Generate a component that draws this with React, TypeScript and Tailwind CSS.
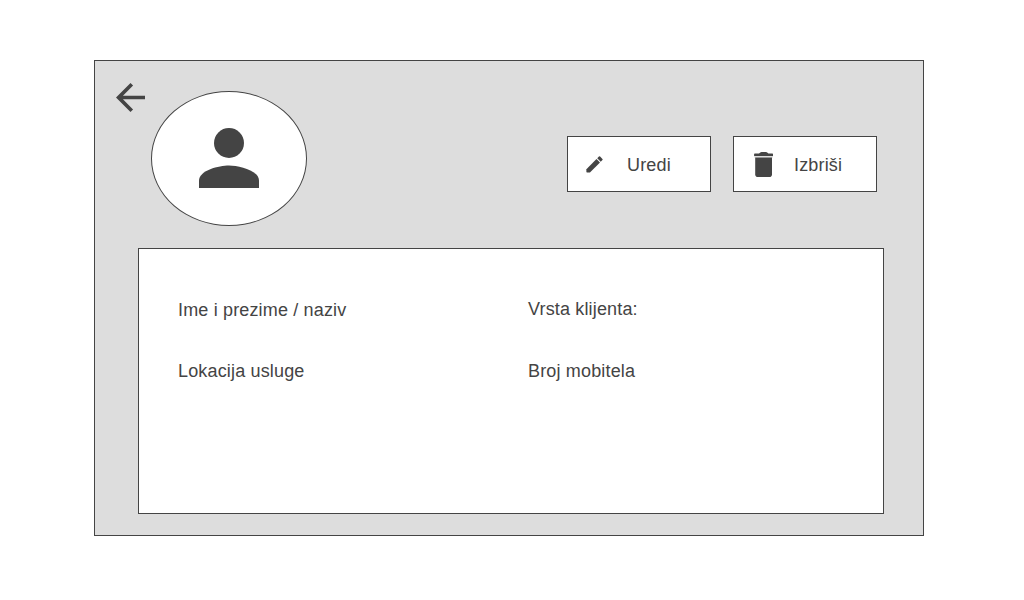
import type { ReactNode } from "react";

function ArrowBack() {
  return (
    <svg viewBox="0 0 28 28" className="ml-[21px] mt-[22px] h-[29px] w-[29px] shrink-0" fill="#444444" aria-hidden="true">
      <path d="M28 12.25H6.7L16.5 2.47L14 0L0 14L14 28L16.47 25.53L6.7 15.75H28Z" />
    </svg>
  );
}

function Avatar() {
  return (
    <div className="ml-[6px] mt-[30px] flex h-[135px] w-[156px] shrink-0 items-start justify-center rounded-[50%] border border-[#444444] bg-white pt-[36px]">
      <svg viewBox="0 0 60 60" className="h-[60px] w-[60px]" fill="#444444" aria-hidden="true">
        <circle cx="30" cy="15" r="15" />
        <path d="M30 37.5C20 37.5 0 42.5 0 52.5V60H60V52.5C60 42.5 40 37.5 30 37.5Z" />
      </svg>
    </div>
  );
}

function ActionButton({ icon, children }: { icon: ReactNode; children: ReactNode }) {
  return (
    <button className="flex h-[56px] w-[144px] items-center border border-[#444444] bg-white tracking-[0.16px]">
      {icon}
      {children}
    </button>
  );
}

function EditIcon() {
  return (
    <svg viewBox="0 0 18 18" className="ml-[18px] h-[17px] w-[17px] shrink-0" fill="#444444" aria-hidden="true">
      <path d="M.4 13.9V16.8Q.4 17.5 1.1 17.5H4.2L14.8 6.9L11.1 3.2Z" />
      <path d="M17.4 4.3c.35-.35.35-.9 0-1.25L14.95.6a.9.9 0 0 0-1.25 0L11.9 2.4 15.6 6.1z" />
    </svg>
  );
}

function TrashIcon() {
  return (
    <svg viewBox="0 0 20 25" className="ml-[20px] h-[25px] w-[20px] shrink-0" fill="#444444" aria-hidden="true">
      <path d="M.2 4H19V5.6H.2Z" fill="#dddddd" />
      <path d="M1.2 5.6H18V22.2Q18 25 15.2 25H4Q1.2 25 1.2 22.2Z" />
      <path d="M.8 1.4H5L6.3 .5Q6.8 0 7.5 0H12Q12.7 0 13.2 .5L14.4 1.4H18.4Q19 1.4 19 2V4H.1V2Q.1 1.4 .8 1.4Z" />
    </svg>
  );
}

export default function App() {
  return (
    <div className="flex h-[600px] w-[1024px] bg-white pl-[94px] pt-[60px] font-['Liberation_Sans',Arial,sans-serif] text-[18px] leading-[22px] tracking-[0.16px] text-[#444444]">
      <main className="flex h-[476px] w-[830px] flex-col border border-[#444444] bg-[#dddddd]">
        <header className="flex h-[187px] items-start">
          <ArrowBack />
          <Avatar />
          <div className="ml-auto mr-[46px] mt-[75px] flex gap-[22px]">
            <ActionButton icon={<EditIcon />}>
              <span className="ml-[24px] pt-[2px]">Uredi</span>
            </ActionButton>
            <ActionButton icon={<TrashIcon />}>
              <span className="ml-[20px] pt-[2px]">Izbriši</span>
            </ActionButton>
          </div>
        </header>
        <section className="ml-[43px] grid h-[266px] w-[746px] grid-cols-[350px_1fr] content-start gap-y-[39px] border border-[#444444] bg-white pl-[39px] pt-[50px]">
          <p>Ime i prezime / naziv</p>
          <p className="-mt-px">Vrsta klijenta:</p>
          <p>Lokacija usluge</p>
          <p>Broj mobitela</p>
        </section>
      </main>
    </div>
  );
}
